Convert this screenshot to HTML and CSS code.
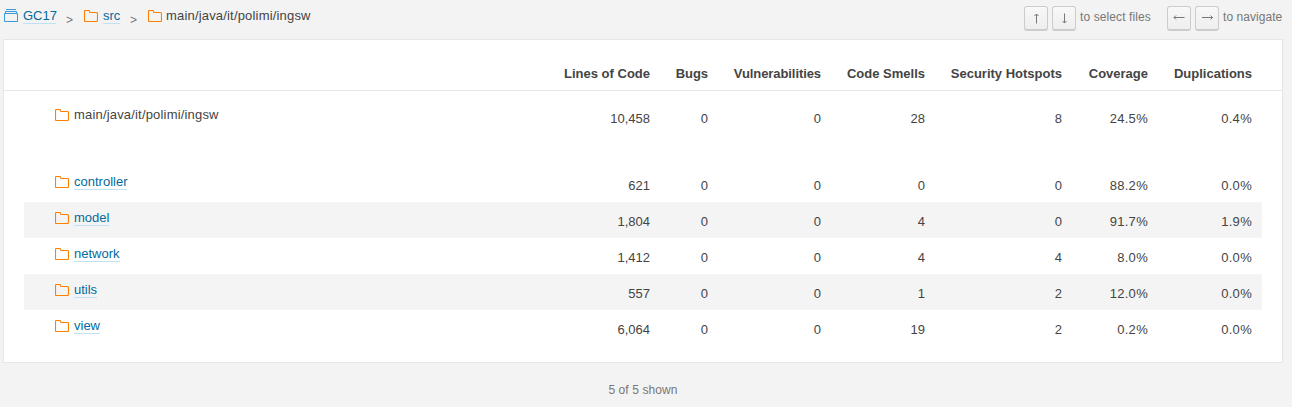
FILE: index.html
```html
<!DOCTYPE html>
<html lang="en">
<head>
<meta charset="utf-8">
<title>Code</title>
<link rel="stylesheet" href="styles.css">
</head>
<body>
<svg width="0" height="0" class="defs">
  <symbol id="folder" viewBox="0 0 14 12"><path d="M.5 10.5V1.5Q.5.5 1.5.5H4.7Q5.5.5 5.5 1.5V1.7Q5.5 2.5 6.5 2.5H12.5Q13.5 2.5 13.5 3.5V10.5Q13.5 11.5 12.5 11.5H1.5Q.5 11.5.5 10.5Z" fill="none" stroke="currentColor" stroke-width="1.15"/></symbol>
</svg>
<header class="top">
  <nav class="crumbs">
    <svg class="project" width="14" height="13" viewBox="0 0 14 13"><path d="M2 .5H12M1.5 4V2.5H12.5V4M.5 4.5H13.5V12.5H.5Z" fill="none" stroke="#3a9ad9"/></svg>
    <a class="link c-root" href="#">GC17</a>
    <span class="sep s1">&gt;</span>
    <svg class="folder"><use href="#folder"/></svg>
    <a class="link c-src" href="#">src</a>
    <span class="sep s2">&gt;</span>
    <svg class="folder"><use href="#folder"/></svg>
    <span class="c-path">main/java/it/polimi/ingsw</span>
  </nav>
  <div class="keys">
    <span class="key"><svg width="24" height="24"><path d="M11.5 7V16.5M9.5 9L11.5 7L13.5 9"/></svg></span>
    <span class="key"><svg width="24" height="24"><path d="M11.5 6.5V16M9.5 14L11.5 16L13.5 14"/></svg></span>
    <span class="hint select">to select files</span>
    <span class="key"><svg width="24" height="24"><path d="M6 10.5H16.5M8 8.5L6 10.5L8 12.5"/></svg></span>
    <span class="key"><svg width="24" height="24"><path d="M6 10.5H16.5M14.5 8.5L16.5 10.5L14.5 12.5"/></svg></span>
    <span class="hint nav">to navigate</span>
  </div>
</header>
<main class="panel">
  <div class="row head"><b></b><b>Lines of Code</b><b class="bugs">Bugs</b><b class="vulnerabilities">Vulnerabilities</b><b>Code Smells</b><b>Security Hotspots</b><b>Coverage</b><b>Duplications</b></div>
  <div class="row base"><div class="name"><svg class="folder"><use href="#folder"/></svg><span class="path">main/java/it/polimi/ingsw</span></div><span>10,458</span><span>0</span><span>0</span><span>28</span><span>8</span><span class="pct">24.5%</span><span class="pct">0.4%</span></div>
  <div class="row"><div class="name"><svg class="folder"><use href="#folder"/></svg><a class="link" href="#">controller</a></div><span>621</span><span>0</span><span>0</span><span>0</span><span>0</span><span class="pct">88.2%</span><span class="pct">0.0%</span></div>
  <div class="row alt"><div class="name"><svg class="folder"><use href="#folder"/></svg><a class="link" href="#">model</a></div><span>1,804</span><span>0</span><span>0</span><span>4</span><span>0</span><span class="pct">91.7%</span><span class="pct">1.9%</span></div>
  <div class="row"><div class="name"><svg class="folder"><use href="#folder"/></svg><a class="link" href="#">network</a></div><span>1,412</span><span>0</span><span>0</span><span>4</span><span>4</span><span class="pct">8.0%</span><span class="pct">0.0%</span></div>
  <div class="row alt"><div class="name"><svg class="folder"><use href="#folder"/></svg><a class="link" href="#">utils</a></div><span>557</span><span>0</span><span>0</span><span>1</span><span>2</span><span class="pct">12.0%</span><span class="pct">0.0%</span></div>
  <div class="row"><div class="name"><svg class="folder"><use href="#folder"/></svg><a class="link" href="#">view</a></div><span>6,064</span><span>0</span><span>0</span><span>19</span><span>2</span><span class="pct">0.2%</span><span class="pct">0.0%</span></div>
</main>
<footer class="shown">5 of 5 shown</footer>
</body>
</html>
```
FILE: styles.css
```css
* { box-sizing: border-box; }
body { margin: 0; height: 407px; overflow: hidden; background: #f3f3f3; color: #444; font: 13px/16px "Liberation Sans", Arial, sans-serif; }
svg { display: block; flex: none; }
.defs { display: none; }
.folder { width: 14px; height: 12px; color: #ff8000; }
.link { color: #046a9c; text-decoration: none; border-bottom: 1px solid #bfe1f3; height: 16px; line-height: 15px; }
.top { display: flex; justify-content: space-between; height: 39px; padding: 0 10px 0 4px; }
.crumbs { display: flex; align-items: flex-start; padding-top: 8px; white-space: nowrap; }
.crumbs svg { margin-top: 2px; }
.crumbs .project { margin-top: 1px; }
.c-root { margin-left: 5px; width: 33px; }
.sep { font-size: 12px; margin-top: 4px; color: #777; width: 7px; }
.s1 { margin-left: 10px; margin-right: 11px; }
.c-src { margin-left: 5px; width: 17px; }
.s2 { margin-left: 10px; margin-right: 11px; }
.c-path { margin-left: 4px; line-height: 15px; letter-spacing: .18px; }
.keys { display: flex; padding-top: 6px; font-size: 12px; color: #777; white-space: nowrap; }
.key { width: 24px; height: 25px; margin-right: 4px; border: 1px solid #ccc; border-bottom-width: 2px; border-radius: 3px; background: linear-gradient(#f8f8f8, #eee); }
.key svg { width: 22px; height: 22px; fill: none; stroke: #777; }
.hint { line-height: 23px; }
.select { width: 71px; margin-right: 16px; letter-spacing: .1px; }
.nav { width: 59px; letter-spacing: .05px; }
.panel { width: 1280px; height: 324px; margin-left: 3px; background: #fff; border: 1px solid #e6e6e6; }
.row { display: grid; grid-template-columns: 526px 100px 58px 113px 104px 137px 86px 104px; height: 36px; margin: 0 20px; align-items: center; text-align: right; white-space: nowrap; }
.row > span { padding-top: 4px; }
.row > .pct { letter-spacing: .3px; }
.head { height: 51px; margin: 0; padding: 18px 20px 0; border-bottom: 1px solid #e6e6e6; }
.bugs, .vulnerabilities { letter-spacing: -.08px; }
.base { margin-top: 8px; margin-bottom: 31px; }
.alt { background: #f4f4f4; }
.name { display: flex; height: 36px; padding: 8px 0 0 31px; line-height: 15px; }
.name .folder { margin: 2px 5px 0 0; }
.path { letter-spacing: .18px; }
.shown { width: 1286px; margin-top: 19px; text-align: center; font-size: 12px; letter-spacing: .1px; color: #777; }
```
